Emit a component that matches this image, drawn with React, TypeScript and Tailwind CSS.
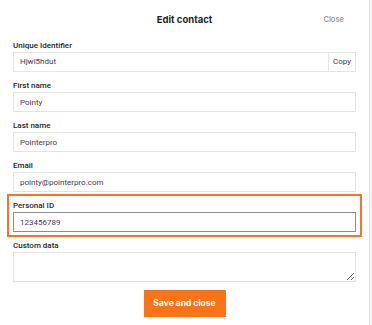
import React from "react";

const labelCls =
  "block h-[12px] text-[8px] leading-[12px] font-medium text-[#1e1e1e] font-['Roboto',sans-serif]";
const inputCls =
  "block h-[20px] w-full rounded-[1px] border border-[#e4e4e4] bg-white px-[6px] text-[8px] text-[#4a3550] font-['Roboto',sans-serif] outline-none";

function Campo({ rotulo, valor, classe = "" }: { rotulo: string; valor: string; classe?: string }) {
  return (
    <div className={classe}>
      <label className={labelCls}>{rotulo}</label>
      <input readOnly value={valor} className={inputCls} />
    </div>
  );
}

export default function App() {
  return (
    <div className="h-[325px] w-[372px] overflow-hidden bg-[#f6f6f6]">
      <div className="h-[325px] w-[370px] border-r border-[#e2e2e2] bg-white">
        <div className="relative flex h-[40px] items-center justify-center">
          <h1 className="text-[9.5px] font-bold text-[#1f1f1f] font-['Inter',sans-serif]">Edit contact</h1>
          <span className="absolute right-[25px] top-[14px] text-[7.5px] font-semibold text-[#9a9a9a] font-['Inter',sans-serif]">
            Close
          </span>
        </div>

        <div className="flex flex-col px-[13px]">
          <div>
            <label className={labelCls}>Unique Identifier</label>
            <div className="flex h-[20px] w-full border border-[#e4e4e4] bg-white">
              <input
                readOnly
                value="Hjwl5hdut"
                className="block min-w-0 flex-1 px-[6px] text-[8px] text-[#4a3550] font-['Roboto',sans-serif] outline-none"
              />
              <span className="flex w-[27px] items-center justify-center border-l border-[#e4e4e4] text-[8px] text-[#4a3550] font-['Roboto',sans-serif]">
                Copy
              </span>
            </div>
          </div>

          <Campo rotulo="First name" valor="Pointy" classe="mt-[8px]" />
          <Campo rotulo="Last name" valor="Pointerpro" classe="mt-[8px]" />
          <Campo rotulo="Email" valor="pointy@pointerpro.com" classe="mt-[8px]" />

          <div className="-mx-[6px] mt-[2px] border-2 border-[#f6752b] px-[4px] pt-[4px] pb-[3px]">
            <label className={labelCls}>Personal ID</label>
            <input
              readOnly
              value="123456789"
              className="block h-[20px] w-full border border-[#968898] bg-white px-[6px] text-[8px] text-[#4a3550] font-['Roboto',sans-serif] outline-none"
            />
          </div>

          <div className="mt-[3px]">
            <label className={labelCls}>Custom data</label>
            <textarea
              readOnly
              className="block h-[30px] w-full border border-[#e4e4e4] bg-white px-[6px] text-[8px] outline-none"
            />
          </div>

          <div className="mt-[8px] flex justify-center">
            <button className="h-[27px] w-[82px] bg-[#f97419] text-[8.5px] font-bold text-white font-['Inter',sans-serif]">
              Save and close
            </button>
          </div>
        </div>
      </div>
    </div>
  );
}
